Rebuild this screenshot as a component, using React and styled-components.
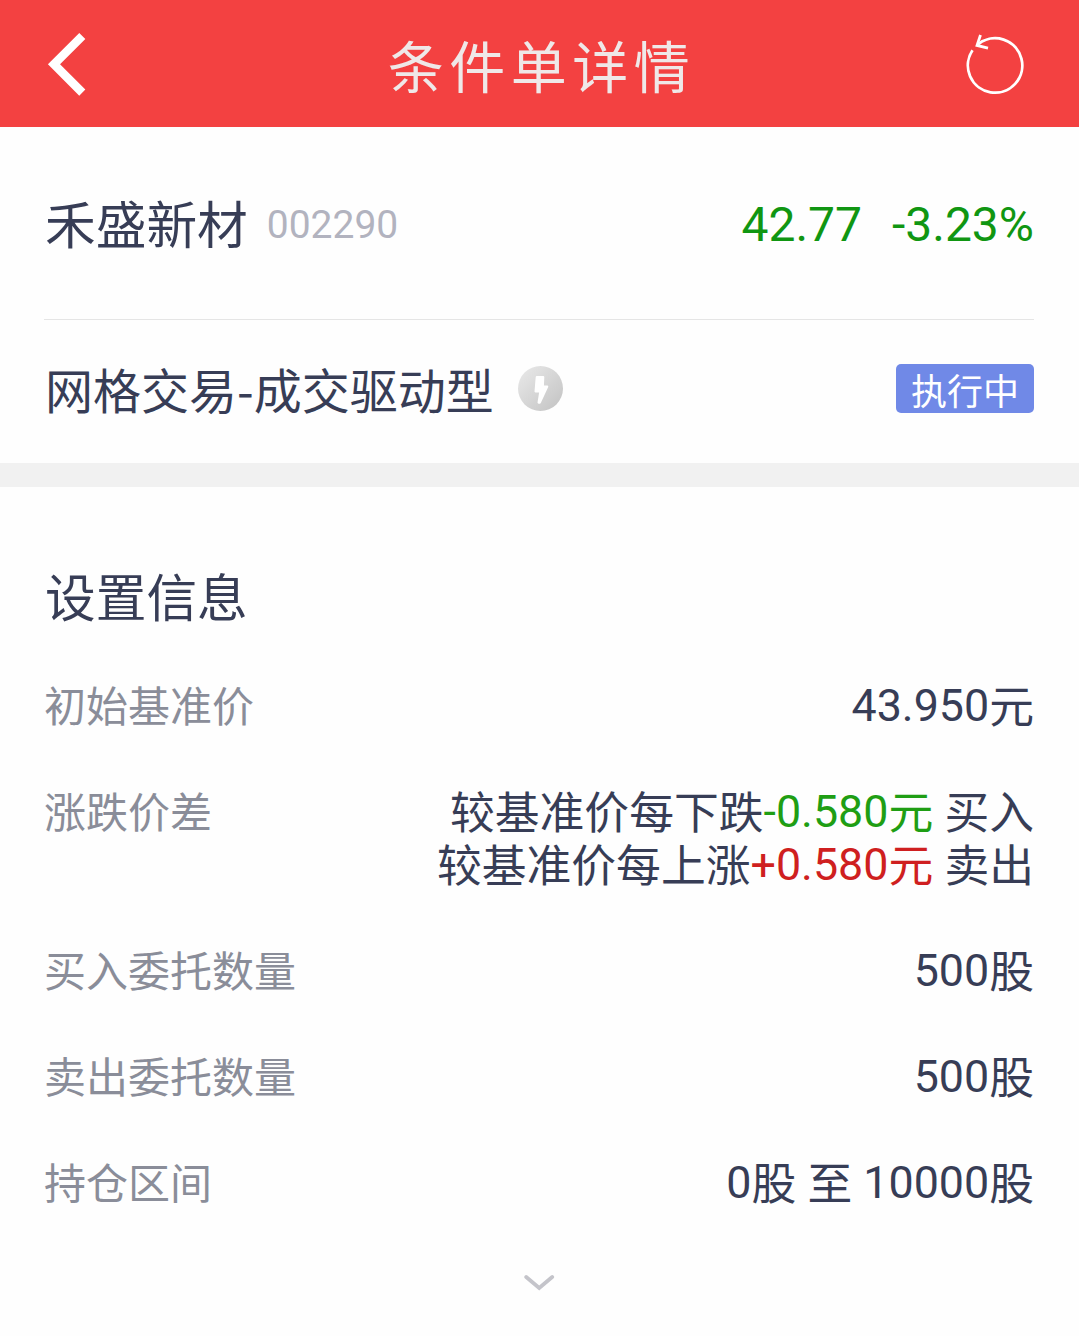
import styled, { createGlobalStyle } from "styled-components";

const GlobalStyle = createGlobalStyle`
  * {
    box-sizing: border-box;
  }

  body {
    margin: 0;
    background: #fefefe;
    color: #373d56;
    font-family: Roboto, "Noto Sans CJK SC", sans-serif;
  }
`;

const settings = [
  { label: "初始基准价", lines: [[{ text: "43.950元" }]] },
  {
    label: "涨跌价差",
    lines: [
      [{ text: "较基准价每下跌" }, { text: "-0.580元", color: "#1f9e14" }, { text: " 买入" }],
      [{ text: "较基准价每上涨" }, { text: "+0.580元", color: "#cf1f20" }, { text: " 卖出" }],
    ],
  },
  { label: "买入委托数量", lines: [[{ text: "500股" }]] },
  { label: "卖出委托数量", lines: [[{ text: "500股" }]] },
  { label: "持仓区间", lines: [[{ text: "0股 至 10000股" }]] },
];

// Han characters sit slightly below the digits' baseline
const splitHan = (text) => text.split(/([\u4e00-\u9fff]+)/).filter(Boolean);
const isHan = (text) => /[\u4e00-\u9fff]/.test(text);

const BackIcon = () => (
  <svg width="40" height="64" viewBox="0 0 40 64" fill="none">
    <path d="M36.3 4L8 32.3L36.3 60.6" stroke="#fff" strokeWidth="8.6" />
  </svg>
);

const RefreshIcon = () => (
  <svg width="70" height="70" viewBox="0 0 70 70" fill="none" stroke="#fff" strokeWidth="2.8">
    <path d="M12.5 21.3A27.2 27.2 0 1 0 18 15.3" />
    <path d="M20.5 6L17 16.4L28 19.2" />
  </svg>
);

const BoltIcon = () => (
  <svg width="45" height="45" viewBox="0 0 45 45">
    <defs>
      <linearGradient id="bolt" x1="0" y1="0" x2="1" y2="1">
        <stop offset="0.1" stopColor="#e6e6e6" />
        <stop offset="0.9" stopColor="#c6c6c6" />
      </linearGradient>
    </defs>
    <circle cx="22.5" cy="22.5" r="22.5" fill="url(#bolt)" />
    <path
      d="M18.8 11H25.2L24.8 20.6H29.2L21.8 36.6H20.6L22.4 25.4H17.6Z"
      fill="#fff"
      stroke="#fff"
      strokeWidth="2.2"
      strokeLinejoin="round"
    />
  </svg>
);

const MoreIcon = () => (
  <svg width="32" height="20" viewBox="0 0 32 20" fill="none">
    <path d="M2.2 3L15.2 14L28.2 3" stroke="#c4c4ca" strokeWidth="3.8" strokeLinecap="round" />
  </svg>
);

const App = () => (
  <Page>
    <GlobalStyle />
    <Header>
      <BackIcon />
      <Title>条件单详情</Title>
      <RefreshIcon />
    </Header>
    <StockRow>
      <StockName>禾盛新材</StockName>
      <StockCode>002290</StockCode>
      <Price>42.77</Price>
      <Change>-3.23%</Change>
    </StockRow>
    <StrategyRow>
      <Strategy>网格交易-成交驱动型</Strategy>
      <BoltIcon />
      <Status>执行中</Status>
    </StrategyRow>
    <Settings>
      <Heading>设置信息</Heading>
      {settings.map(({ label, lines }) => (
        <Setting key={label}>
          <Label>{label}</Label>
          <Value>
            {lines.map((parts, i) => (
              <Line key={i}>
                {parts.map(({ text, color }) => (
                  <Part key={text} $color={color}>
                    {splitHan(text).map((run, j) => (isHan(run) ? <Han key={j}>{run}</Han> : run))}
                  </Part>
                ))}
              </Line>
            ))}
          </Value>
        </Setting>
      ))}
    </Settings>
    <More>
      <MoreIcon />
    </More>
  </Page>
);

const Page = styled.main`
  width: 100%;
  height: 1336px;
  overflow: hidden;
`;

const Header = styled.header`
  display: flex;
  align-items: center;
  justify-content: space-between;
  height: 127px;
  padding: 0 49px 0 46px;
  background: #f34141;
`;

const Title = styled.h1`
  margin: 0;
  padding: 11px 0 0 37px;
  color: #efe8e8;
  font-size: 56px;
  font-weight: 400;
  letter-spacing: 5.5px;
  line-height: 80px;
`;

const StockRow = styled.section`
  display: flex;
  align-items: center;
  height: 193px;
  margin: 0 45px 0 44px;
  border-bottom: 1px solid #e5e5e5;
`;

const StockName = styled.h2`
  margin: 0;
  padding: 0 0 2px 1px;
  font-size: 50.7px;
  font-weight: 400;
`;

const StockCode = styled.span`
  margin-left: 19px;
  padding-top: 3px;
  color: #b2b3bf;
  font-size: 39px;
`;

const Price = styled.span`
  margin-left: auto;
  padding-top: 2px;
  color: #109612;
  font-size: 48px;
`;

const Change = styled(Price)`
  margin-left: 30px;
`;

const StrategyRow = styled.section`
  display: flex;
  align-items: center;
  height: 167px;
  padding: 0 45px 6px 45px;
  border-bottom: 24px solid #f1f1f1;
`;

const Strategy = styled.span`
  margin-right: 24px;
  padding-bottom: 1px;
  font-family: "Noto Sans CJK SC", sans-serif;
  font-size: 48px;
`;

const Status = styled.span`
  width: 138px;
  height: 49px;
  margin-left: auto;
  padding-top: 4px;
  border-radius: 5px;
  background: #7089e7;
  color: #fff;
  font-size: 36px;
  line-height: 50px;
  text-align: center;
`;

const Settings = styled.section`
  padding: 73px 45px 0 44px;
`;

const Heading = styled.h2`
  margin: 0 0 39px;
  padding-left: 1px;
  font-size: 50.7px;
  font-weight: 400;
  line-height: 80px;
`;

const Setting = styled.div`
  display: flex;
  justify-content: space-between;
  margin-bottom: 53px;
  line-height: 53px;
`;

const Label = styled.span`
  padding-top: 5px;
  color: #8a8d99;
  font-size: 42px;
  line-height: 48px;
`;

const Value = styled.div`
  font-size: 44.8px;
  text-align: right;
`;

const Line = styled.div`
  height: 53px;
  white-space: pre;
`;

const Part = styled.span`
  color: ${(p) => p.$color || "inherit"};
`;

const Han = styled.span`
  line-height: 1;
  vertical-align: -2px;
`;

const More = styled.div`
  display: flex;
  justify-content: center;
  padding-top: 12px;
`;

export default App;
